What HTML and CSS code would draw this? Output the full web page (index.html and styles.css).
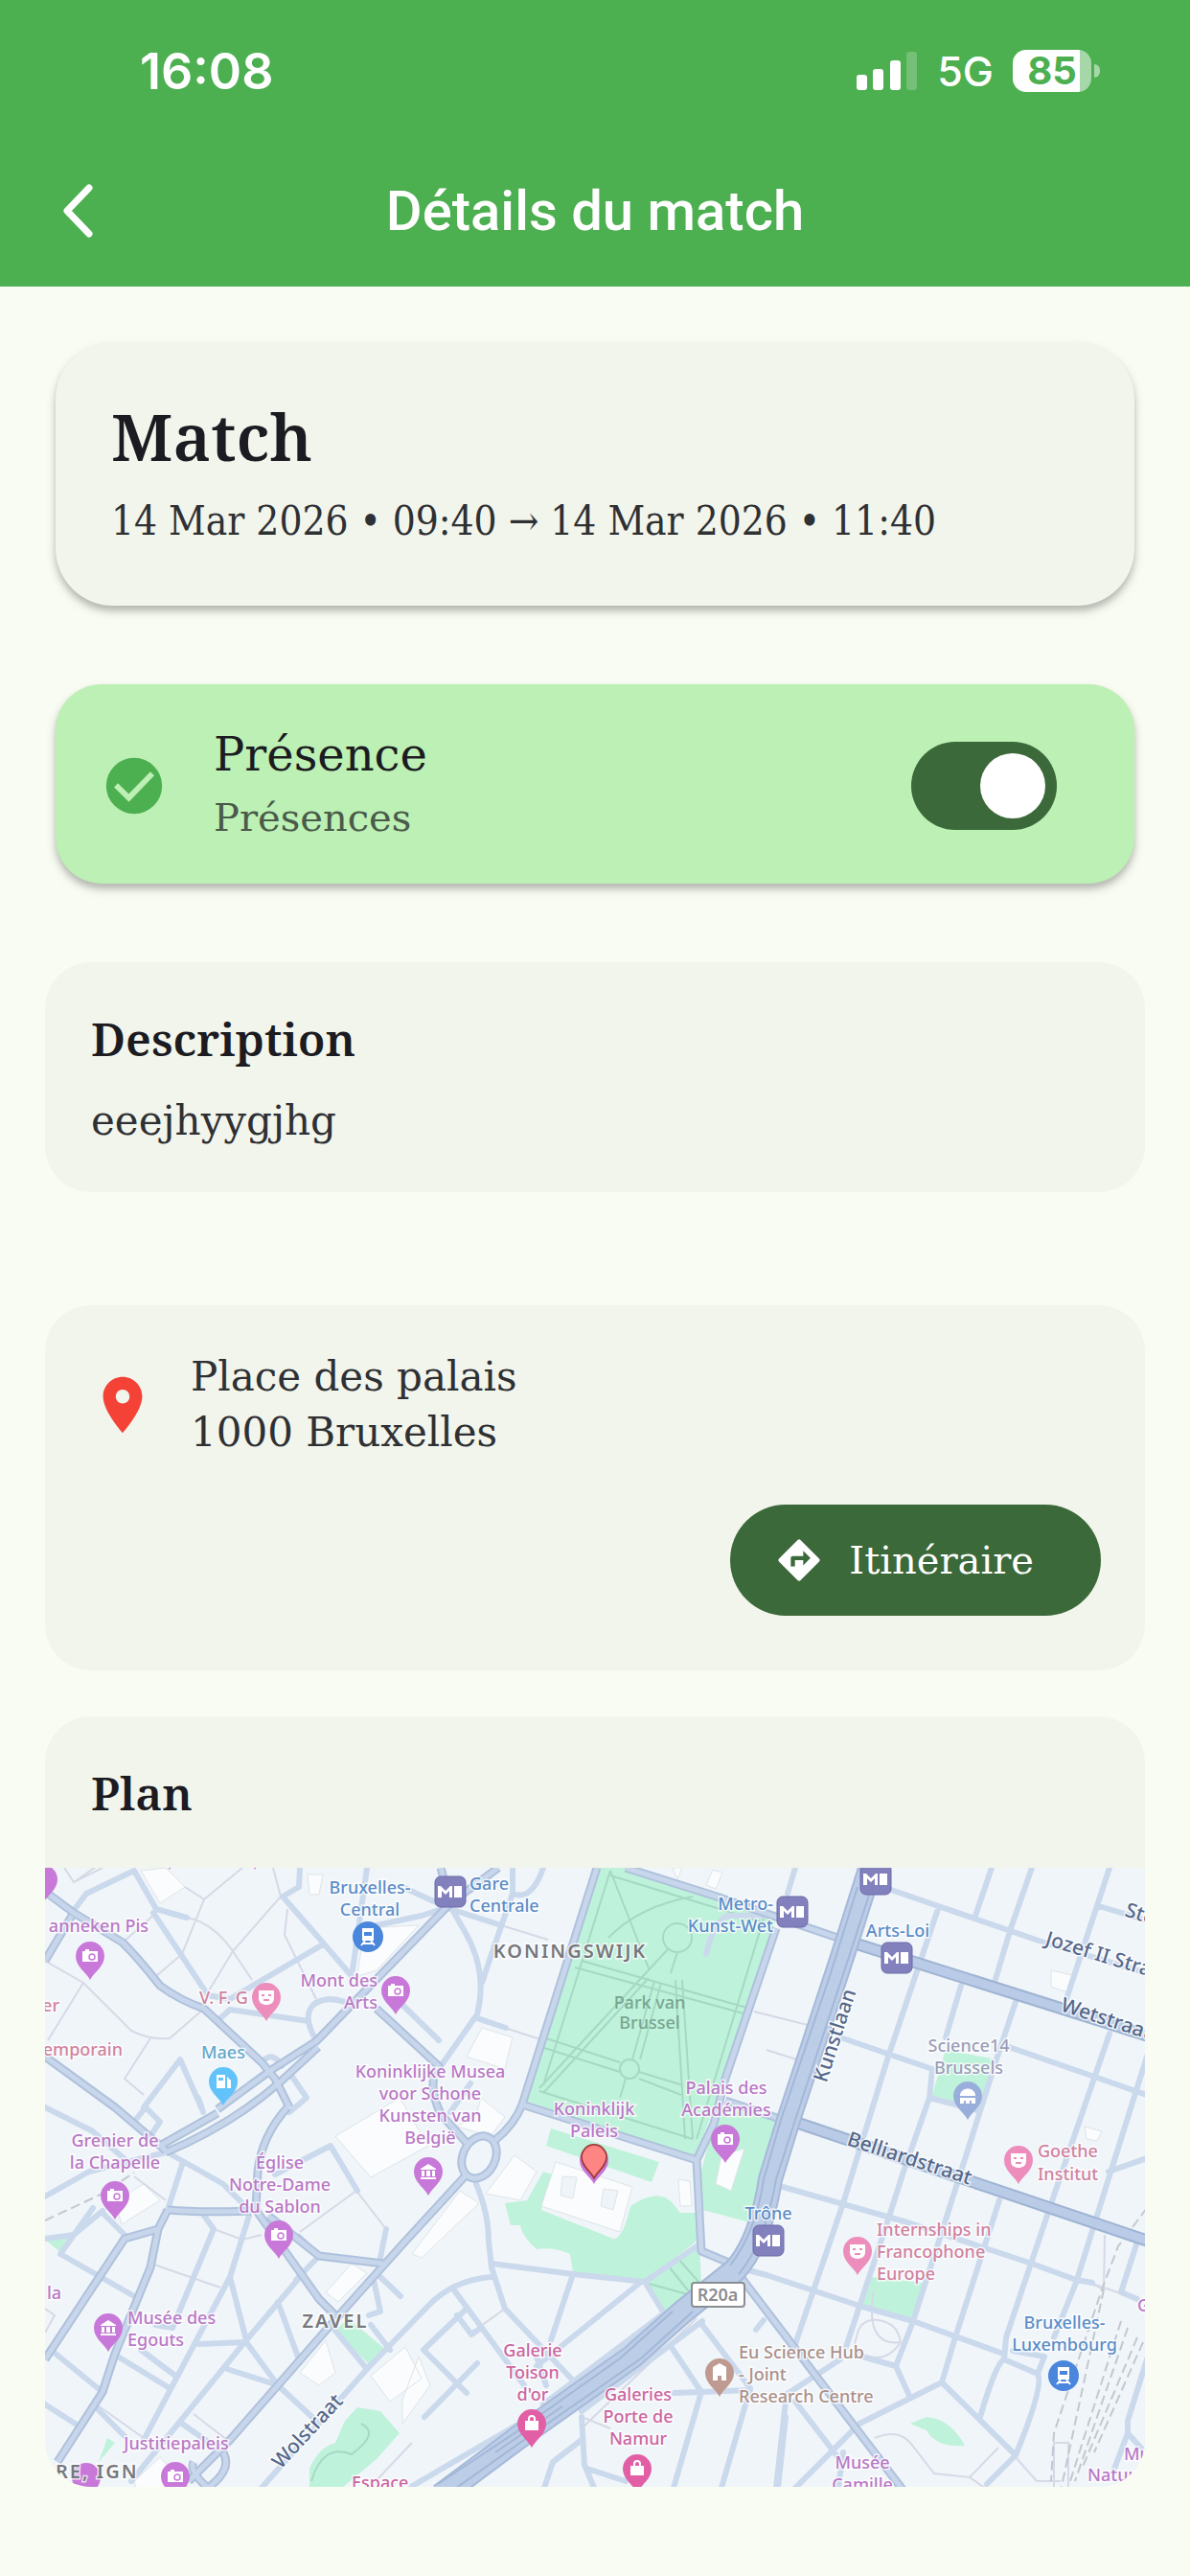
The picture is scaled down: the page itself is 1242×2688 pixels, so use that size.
FILE: index.html
```
<!DOCTYPE html>
<html lang="fr">
<head>
    <meta charset="UTF-8">
    <meta name="viewport" content="width=device-width, initial-scale=1.0">
    <title>Détails du match</title>
    <link rel="stylesheet" href="styles.css">
</head>
<body>
    <header class="header">
        <div class="status-bar">
            <span class="time">16:08</span>
            <div class="status-icons">
                <svg class="signal" viewBox="0 0 64 40" aria-hidden="true">
                    <rect x="0" y="24" width="11" height="16" rx="3"/>
                    <rect x="17" y="18" width="11" height="22" rx="3"/>
                    <rect x="35" y="9" width="11" height="31" rx="3"/>
                    <rect x="52" y="0" width="11" height="40" rx="3" opacity="0.22"/>
                </svg>
                <span class="network">5G</span>
                <div class="battery"><span class="battery-level">85</span></div>
            </div>
        </div>
        <div class="app-bar">
            <button type="button" class="btn-back" aria-label="Retour">
                <svg viewBox="0 0 32 56"><path d="M28 4L5 28l23 24"/></svg>
            </button>
            <h1>Détails du match</h1>
        </div>
    </header>

    <main class="content">
        <!-- Match -->
        <section class="card card-raised match">
            <h2>Match</h2>
            <p class="date">14 Mar 2026 • 09:40 → 14 Mar 2026 • 11:40</p>
        </section>

        <!-- Présence -->
        <section class="card card-raised presence">
            <svg class="icon" viewBox="0 0 24 24" aria-hidden="true">
                <circle cx="12" cy="12" r="10" fill="#4caf50"/>
                <path d="M5.500 11.800l4.600 4.500 8.400-8.700" fill="none" stroke="#bcf0b4" stroke-width="2"/>
            </svg>
            <label class="presence-text" for="presence">
                <span class="presence-title">Présence</span>
                <span class="presence-sub">Présences</span>
            </label>
            <input type="checkbox" role="switch" id="presence" class="switch" checked>
        </section>

        <!-- Description -->
        <section class="card description">
            <h3>Description</h3>
            <p>eeejhyygjhg</p>
        </section>

        <!-- Adresse -->
        <section class="card place">
            <div class="address">
                <svg class="icon" viewBox="0 0 24 24" aria-hidden="true">
                    <path fill="#f44336" d="M12 2C8.1 2 5 5.1 5 9c0 5.300 7 13 7 13s7-7.700 7-13c0-3.900-3.100-7-7-7zm0 9.500a2.500 2.500 0 1 1 0-5 2.500 2.500 0 0 1 0 5z"/>
                </svg>
                <p>Place des palais<br>1000 Bruxelles</p>
            </div>
            <button type="button" class="btn-route">
                <svg viewBox="0 0 24 24" aria-hidden="true">
                    <path fill="#fff" d="M21.700 11.300l-9-9a1 1 0 0 0-1.400 0l-9 9a1 1 0 0 0 0 1.400l9 9a1 1 0 0 0 1.400 0l9-9a1 1 0 0 0 0-1.400zM14 14.500V12h-4v3H8v-4c0-.6.400-1 1-1h5V7.500l3.500 3.500-3.500 3.500z"/>
                </svg>
                <span>Itinéraire</span>
            </button>
        </section>

        <!-- Plan -->
        <section class="card plan">
            <h3>Plan</h3>
            <svg class="map" viewBox="0 0 1148 646" role="img" aria-label="Plan du quartier">
                <defs>
                    <path id="pin" d="M0 25C-4 17-15 11-15 0A15 15 0 1 1 15 0C15 11 4 17 0 25z"/>
                    <g id="camera" fill="#fff">
                        <path d="M-8-5h3v-2h4v2h9V6H-8z"/>
                        <circle cx="2" cy="1" r="3" fill="none" stroke="#c878d8" stroke-width="1.500"/>
                    </g>
                    <g id="museum" fill="#fff">
                        <path d="M-8-3L0-8l8 5v1H-8zM-7-1h3v6h-3zM-2-1h4v6h-4zM4-1h3v6H4zM-8 6H8v2H-8z"/>
                    </g>
                    <g id="mask">
                        <path d="M-8-7H8V1C8 6 4 8 0 8S-8 6-8 1z" fill="#fff"/>
                        <path d="M-5-2h3M2-2h3M-3 3h6" stroke="#ec8dbc" stroke-width="2"/>
                    </g>
                    <g id="bag">
                        <path d="M-7-3H7V7H-7z" fill="#fff"/>
                        <path d="M-3-3v-2a3 3 0 0 1 6 0v2" fill="none" stroke="#fff" stroke-width="2"/>
                    </g>
                    <g id="train">
                        <circle r="16" fill="#4a86dc"/>
                        <path d="M-6-9H6V4H-6z" fill="#fff"/>
                        <path d="M-4-5H4v4H-4z" fill="#4a86dc"/>
                        <path d="M-3 4l-4 5M3 4l4 5M-5 7H5" stroke="#fff" stroke-width="2"/>
                    </g>
                    <g id="metro">
                        <rect x="-16" y="-16" width="32" height="32" rx="6" fill="#8381bd" stroke="#6a69a8"/>
                        <path d="M-13 6V-6h3l5 5 5-5h2V6h-3V-1l-4 4-4-4V6z" fill="#fff"/>
                        <path d="M4-6h8V6H4z" fill="#fff"/>
                    </g>
                    <g id="roads">
                        <path d="M3 27L30 47 81 78Q98 95 120 123 140 138 166 147L226 203 240 220 255 250"/>
                        <path d="M0 97L28 50M180 252L236 211 283 181 320 143 423 37 473 0M120 290L180 256M126 297Q195 268 246 223L285 187"/>
                        <path d="M0 197L73 250 126 295M346 147L411 207Q398 225 413 257L440 287M413 0L423 37"/>
                        <path d="M576 0L498 247Q490 268 470 284M498 247L680 305M606 0L701 30 833 75M763 63L710 220 698 267 680 305 685 400 716 413M710 243L770 263"/>
                        <ellipse cx="453" cy="302" rx="17" ry="23" transform="rotate(25 453 302)"/>
                        <path d="M440 320L373 393 313 460 243 540 193 597 150 640M253 250Q226 280 222 317L220 357 286 450 303 467"/>
                        <path d="M128 357Q160 360 215 358M233 363L286 405 353 413M128 357L118 377 83 387 0 513M118 377L110 417 73 507 60 547 13 620M186 610Q196 628 170 647 150 630 155 620"/>
                    </g>
                    <g id="avenues">
                        <path d="M833 75L1150 175M776 263L1150 389"/>
                    </g>
                    <g id="ring">
                        <path d="M863-5L833 90 776 263 757 325Q747 390 720 420L666 463 613 510 500 590 413 655"/>
                    </g>
                </defs>

                <rect width="1148" height="646" fill="#f0f5f9"/>

                <!-- parcs -->
                <g fill="#bff2da">
                    <path d="M578 0H606L701 33 763 53 710 220 678 303 501 243z"/>
                    <path d="M480 350L503 347 520 317 530 320 518 357 593 387Q603 388 611 353 640 333 655 350L663 360H680L683 387 626 432 551 422 548 403Q530 395 513 398 498 385 496 373L486 373z"/>
                    <path d="M528 272L641 307 633 328 523 290zM626 433L683 393 685 433 646 465z"/>
                    <path d="M706 250L770 263 736 370 686 357 683 323 692 290z"/>
                    <path d="M940 190L993 200 980 250 925 240zM863 427L916 433 905 472 853 457z"/>
                    <path d="M903 580L920 573Q945 575 960 603 930 605 920 587z"/>
                    <path d="M303 483L316 470 356 503 340 520zM326 563L350 567 370 590 346 617 310 647H276V627Q285 605 303 600L313 577zM0 388L26 383 15 400zM65 595L73 600 56 620z"/>
                </g>

                <!-- bâtiments -->
                <g class="building">
                    <path d="M533 307L613 333 600 380 518 353z"/>
                    <path d="M540 322L555 323 551 345 538 342zM583 335L598 337 593 357 580 353z" fill="#eef4f7"/>
                    <path d="M661 325L673 327 675 353 663 353zM706 300L730 293 716 337 700 330z"/>
                    <path d="M460 340L490 300 513 317 496 347zM383 403L433 337 453 350 393 407zM440 197L456 167 488 177 480 210z"/>
                    <path d="M430 270L450 258 455 240 480 260 465 280z"/>
                    <path d="M303 280L370 240 400 290 340 323zM293 443L320 413 336 423 306 453zM73 347L103 330 120 347 80 372z"/>
                    <path d="M100 3L126 0 146 20 120 37zM333 63L390 60 346 107 326 113zM274 7L290 7 286 28 276 28z"/>
                    <path d="M266 527L293 493 303 527 286 540zM340 530L376 500 393 533 360 557zM93 640L120 615 150 647H95zM373 555L390 510 402 540 373 580z"/>
                    <path d="M1050 107L1072 112 1067 130 1050 124zM1085 270L1103 275 1098 285 1087 283zM655 0H665L660 12zM697 2L707 5 700 22 690 18z"/>
                </g>

                <!-- sentiers -->
                <g class="path">
                    <path d="M146 20L166 33 143 90 116 113M166 33L206 0M148 52Q175 57 196 87L216 117M196 87L246 30 238 0M196 87L170 130M81 78L116 47M0 97L40 120 90 170Q110 180 130 178L166 147M40 120L3 180M110 178L83 220 103 237M253 43L250 70 283 137M20 0L30 15 60 0M30 15L66-10"/>
                    <path d="M111 413L183 438M93 322L126 347M266 380L325 337 356 377M176 377L206 388 226 383M55 561L103 595M155 570L190 597M0 460L10 467 0 485"/>
                    <path d="M590 3L520 227M590 3L630 105M588 73Q620 40 676 30M560 97L736 147M553 104L733 153M520 177L600 203M620 213L666 227M518 187L600 213M620 220L664 237M650 85L516 230M630 115L520 235M660 88L653 110M665 117L676 283M658 117L668 283M643 120L621 200M636 118L613 200M516 233L676 283M750 53L680 283M590 8L750 57M606 220L600 240" stroke="#a5d9c4"/>
                    <circle cx="660" cy="73" r="15" stroke="#a5d9c4"/>
                    <circle cx="610" cy="210" r="10" stroke="#a5d9c4"/>
                    <path d="M626 433L671 445M650 415L672 442M660 407L683 433M278 640Q290 600 320 612 350 590 330 580" stroke="#a5d9c4"/>
                    <path d="M480 167L520 180M476 60L525 75M480 460L455 478M560 573L590 585M680 470L560 585M383 600L345 640M866 595Q890 585 903 600L928 632 965 636 995 605M965 636L985 650M865 440Q855 500 893 495M847 490Q850 470 870 472 890 475 893 495 880 515 860 510 840 505 847 490M740 150L800 165M753 190L800 205M1106 383L1105 440 1090 433 1140 450M1053 650V600H1068V650M1013 615L1035 640H1060"/>
                    <path class="rail" d="M1150 355L1120 395 1103 440 1053 590 1050 640M1123 473L1070 640M1130 480L1075 640M1146 495L1095 610M1105 440L1060 650M1140 490L1083 625M0 368L60 340 93 318"/>
                </g>

                <!-- rues -->
                <g class="street">
                    <path d="M31 43L43 27 93 3 116 43 148 52M113 47L170 133 193 137 290 80M266 0L265 20 248 30 290 78 320 113M183 157L193 148 275 160M283 180Q268 155 280 143 293 133 313 140M226 203Q238 190 247 207M103 250L141 200 163 250M373 143L411 180M346 60L393 50 423 40M336 0L321 107M373 20L423 43 476 60M258 218L273 240 255 255M0 250L50 275 90 310"/>
                    <path d="M413 207L451 153Q462 110 440 70L423 40M488 0V27L466 90 456 120M520 0Q508 35 488 27M451 157L481 167M444 225L423 255M690 90Q700 50 715 50H760"/>
                    <path d="M450 330Q463 360 463 390L466 417 480 460 553 537M466 413L551 424 626 432 683 393M550 427L528 493M621 433L513 520M626 432L646 465M466 427Q426 430 400 457L336 523 226 647M425 438L500 540M440 460L395 503 440 548M451 517L396 573M430 467L445 487 455 480M686 473L560 567M646 465L520 560M655 502L685 547 656 647M656 548L736 545M686 477L736 543 706 647M560 573L563 623 573 647M560 597L530 620 521 647M566 627L606 640M773 573L765 647M723 417L753 425M380 647L500 577M513 510L523 540M742 482L750 472"/>
                    <path d="M783 0L775 27M883 23L1040 77 1150 110M933 40L880 197 833 350 783 497M988 0L971 50M1030 0L1008 63 990 123M1111 0L1066 137M1100 40L1150 55M956 123L940 177M1013 140L993 200 936 380 906 473 888 520 903 553M830 177L926 210 923 240 973 253M923 240L896 317 880 367 836 500M1006 187L1150 237M1111 173L1056 333 1003 490 1001 513 1036 528 1043 510 1010 504M1150 197L1076 433 1053 490M1110 317L1150 303"/>
                    <path d="M770 333L900 370 1030 413 1076 430 1093 433M753 425L850 457 906 473 1000 507M996 347L950 490 936 537 1013 613 983 643M853 510L888 520M936 537L850 580 783 647M830 513L773 550M773 557L763 647M783 557L826 613M833 610L828 647M1001 513Q993 515 976 573M1036 528Q1043 540 1013 613M1140 390L1123 443 1140 450M1150 513L1130 577V590L1116 627M1130 590L1148 610"/>
                    <path d="M143 310L128 357M133 300L186 330 206 350M0 343L46 317 126 297M60 360L83 383M0 387L30 383 60 358M16 403L93 447M166 363L176 377 133 480 115 477M213 363L193 427 103 597M193 427L210 493M160 497L210 495 243 540M16 403L50 355M266 427L210 493 90 640M243 453L265 513M190 523L243 540 283 577M6 503L60 547M76 510L130 543M100 503L136 530M0 560L36 583M53 563L83 593M240 320L298 290 326 337M356 377L350 407M343 430L350 463 338 467M350 427L371 447M303 483L336 523M340 477L360 503M143 580L186 610M265 385L286 405 262 430M93 265L105 250 120 265 110 280M165 255L160 240"/>
                </g>

                <!-- axes principaux -->
                <use href="#roads" class="road-edge"/>
                <use href="#roads" class="road"/>
                <path class="road-edge" d="M723 423L896 650"/>
                <path class="road" d="M723 423L896 650"/>
                <use href="#avenues" class="avenue-edge"/>
                <use href="#avenues" class="avenue"/>
                <use href="#ring" class="ring-edge"/>
                <use href="#ring" class="ring"/>
                <path class="ring-lane" d="M866 10L840 90 783 263 763 325Q752 390 724 424M848 20L820 110 768 263 750 325Q742 380 715 415M655 463L600 512 490 590 410 643M676 463L622 512 510 590 425 650M540 562L470 610"/>

                <!-- repères -->
                <g fill="#c878d8" class="pins">
                    <use href="#pin" x="-2" y="12"/>
                    <use href="#pin" x="130" y="-23"/>
                    <use href="#pin" x="219" y="-23"/>
                    <use href="#pin" x="47" y="92"/><use href="#camera" x="47" y="92"/>
                    <use href="#pin" x="366" y="128"/><use href="#camera" x="366" y="128"/>
                    <use href="#pin" x="73" y="342"/><use href="#camera" x="73" y="342"/>
                    <use href="#pin" x="244" y="383"/><use href="#camera" x="244" y="383"/>
                    <use href="#pin" x="710" y="283"/><use href="#camera" x="710" y="283"/>
                    <use href="#pin" x="136" y="635"/><use href="#camera" x="136" y="635"/>
                    <use href="#pin" x="43" y="636"/>
                    <use href="#pin" x="66" y="480"/><use href="#museum" x="66" y="480"/>
                    <use href="#pin" x="400" y="317"/><use href="#museum" x="400" y="317"/>
                    <use href="#pin" x="573" y="305"/>
                </g>
                <g fill="#ec8dbc" class="pins">
                    <use href="#pin" x="231" y="135"/><use href="#mask" x="231" y="135"/>
                    <use href="#pin" x="1016" y="305"/><use href="#mask" x="1016" y="305"/>
                    <use href="#pin" x="848" y="400"/><use href="#mask" x="848" y="400"/>
                </g>
                <g fill="#e25fa6" class="pins">
                    <use href="#pin" x="508" y="580"/><use href="#bag" x="508" y="580"/>
                    <use href="#pin" x="618" y="627"/><use href="#bag" x="618" y="627"/>
                </g>
                <use href="#pin" x="186" y="223" fill="#62c3fb"/>
                <path d="M179 216h9v14h-9zM190 218l4 4v8h-4" fill="#fff"/>
                <path d="M181 219h5v3h-5z" fill="#62c3fb"/>
                <use href="#pin" x="704" y="527" fill="#bf9a90"/>
                <path d="M697 535V521l7-4 7 4v14h-5v-5h-4v5z" fill="#fff"/>
                <use href="#pin" x="963" y="238" fill="#9aaedb"/>
                <path d="M955 238c0-10 16-10 16 0zM955 240h16v6h-4v-3h-2v3h-4v-3h-2v3h-4z" fill="#fff"/>
                <use href="#train" x="337" y="72"/>
                <use href="#train" x="1063" y="530"/>
                <use href="#metro" x="423" y="25"/>
                <use href="#metro" x="780" y="46"/>
                <use href="#metro" x="867" y="12"/>
                <use href="#metro" x="889" y="94"/>
                <use href="#metro" x="755" y="389"/>
                <rect x="675" y="433" width="55" height="25" rx="3" fill="#fff" stroke="#8b8d91" stroke-width="2"/>

                <!-- noms -->
                <g class="label transit">
                    <text x="339" y="27" class="mid">Bruxelles-</text>
                    <text x="339" y="50" class="mid">Central</text>
                    <text x="443" y="23">Gare</text>
                    <text x="443" y="46">Centrale</text>
                    <text x="760" y="44" class="end">Metro-</text>
                    <text x="760" y="67" class="end">Kunst-Wet</text>
                    <text x="890" y="72" class="mid">Arts-Loi</text>
                    <text x="755" y="367" class="mid">Trône</text>
                    <text x="1064" y="481" class="mid">Bruxelles-</text>
                    <text x="1064" y="504" class="mid">Luxembourg</text>
                </g>
                <g class="label sight">
                    <text x="108" y="67" class="end">anneken Pis</text>
                    <text x="347" y="124" class="end">Mont des</text>
                    <text x="347" y="147" class="end">Arts</text>
                    <text x="402" y="219" class="mid">Koninklijke Musea</text>
                    <text x="402" y="242" class="mid">voor Schone</text>
                    <text x="402" y="265" class="mid">Kunsten van</text>
                    <text x="402" y="288" class="mid">België</text>
                    <text x="573" y="258" class="mid">Koninklijk</text>
                    <text x="573" y="281" class="mid">Paleis</text>
                    <text x="711" y="236" class="mid">Palais des</text>
                    <text x="711" y="259" class="mid">Académies</text>
                    <text x="73" y="291" class="mid">Grenier de</text>
                    <text x="73" y="314" class="mid">la Chapelle</text>
                    <text x="245" y="314" class="mid">Église</text>
                    <text x="245" y="337" class="mid">Notre-Dame</text>
                    <text x="245" y="360" class="mid">du Sablon</text>
                    <text x="2" y="450">la</text>
                    <text x="86" y="476">Musée des</text>
                    <text x="86" y="499">Egouts</text>
                    <text x="137" y="607" class="mid">Justitiepaleis</text>
                    <text x="853" y="627" class="mid">Musée</text>
                    <text x="853" y="650" class="mid">Camille</text>
                    <text x="1126" y="618">Mu</text>
                    <text x="1088" y="640">Natuur</text>
                    <text x="1140" y="463">G</text>
                </g>
                <g class="label culture">
                    <text x="15" y="150" class="end">er</text>
                    <text x="81" y="196" class="end">emporain</text>
                    <text x="161" y="142">V. F. G</text>
                    <text x="1036" y="302">Goethe</text>
                    <text x="1036" y="326">Institut</text>
                    <text x="868" y="384">Internships in</text>
                    <text x="868" y="407">Francophone</text>
                    <text x="868" y="430">Europe</text>
                </g>
                <g class="label shop">
                    <text x="509" y="510" class="mid">Galerie</text>
                    <text x="509" y="533" class="mid">Toison</text>
                    <text x="509" y="556" class="mid">d'or</text>
                    <text x="619" y="556" class="mid">Galeries</text>
                    <text x="619" y="579" class="mid">Porte de</text>
                    <text x="619" y="602" class="mid">Namur</text>
                    <text x="320" y="648">Espace</text>
                </g>
                <g class="label office">
                    <text x="724" y="512">Eu Science Hub</text>
                    <text x="724" y="535">- Joint</text>
                    <text x="724" y="558">Research Centre</text>
                </g>
                <text x="186" y="199" class="label fuel mid">Maes</text>
                <text x="964" y="192" class="label science mid">Science14</text>
                <text x="964" y="215" class="label science mid">Brussels</text>
                <text x="631" y="147" class="label green mid">Park van</text>
                <text x="631" y="168" class="label green mid">Brussel</text>
                <text x="702" y="452" class="shield mid">R20a</text>
                <g class="label district">
                    <text x="548" y="94" class="mid">KONINGSWIJK</text>
                    <text x="303" y="480" class="mid">ZAVEL</text>
                    <text x="11" y="637">RE, IGN</text>
                </g>
                <g class="label road-name">
                    <text class="mid" transform="translate(831 177) rotate(-72)">Kunstlaan</text>
                    <text transform="translate(836 289) rotate(18)">Belliardstraat</text>
                    <text transform="translate(1059 149) rotate(18)">Wetstraat</text>
                    <text transform="translate(1043 80) rotate(17)">Jozef II Straat</text>
                    <text transform="translate(1126 50) rotate(18)">Steenweg</text>
                    <text transform="translate(246 628) rotate(-47)">Wolstraat</text>
                </g>

                <!-- lieu du match -->
                <use href="#pin" x="0" y="0" transform="translate(573 302) scale(0.87)" fill="#ff8585" stroke="#a03a3a" stroke-width="2"/>
            </svg>
        </section>
    </main>
</body>
</html>
```

FILE: styles.css
```
* {
    margin: 0;
    padding: 0;
    box-sizing: border-box;
}

body {
    font-family: "DejaVu Serif", serif;
    background: #f8fcf2;
    color: #1b1b21;
    min-height: 100vh;
}

button {
    border: none;
    background: none;
    font: inherit;
    cursor: pointer;
}

.header {
    background: #4caf50;
    color: white;
}

.status-bar {
    display: flex;
    justify-content: space-between;
    align-items: center;
    height: 148px;
    padding: 0 94px 0 146px;
    font-family: Inter, sans-serif;
}

.time {
    font-size: 52px;
    font-weight: 600;
}

.status-icons {
    display: flex;
    align-items: center;
    gap: 20px;
}

.signal {
    width: 64px;
    height: 40px;
    fill: white;
}

.network {
    font-size: 43px;
    font-weight: 500;
}

.battery {
    position: relative;
    width: 82px;
    height: 44px;
    margin-right: 9px;
    border-radius: 14px;
    background: linear-gradient(to right, white 85%, rgba(255, 255, 255, 0.5) 85%);
    text-align: center;
}

.battery::after {
    content: "";
    position: absolute;
    right: -9px;
    top: 15px;
    width: 6px;
    height: 14px;
    border-radius: 0 6px 6px 0;
    background: rgba(255, 255, 255, 0.5);
}

.battery-level {
    display: block;
    font-size: 40px;
    line-height: 44px;
    font-weight: 700;
    color: #4caf50;
}

.app-bar {
    display: grid;
    grid-template-columns: 97px 1fr 97px;
    align-items: center;
    height: 151px;
    padding-bottom: 8px;
}

.btn-back {
    justify-self: end;
    height: 56px;
}

.btn-back svg {
    display: block;
    width: 32px;
    height: 56px;
    fill: none;
    stroke: white;
    stroke-width: 7;
    stroke-linecap: round;
    stroke-linejoin: round;
}

.app-bar h1 {
    font-family: Roboto, sans-serif;
    font-size: 58px;
    font-weight: 500;
    text-align: center;
}

.content {
    padding: 58px 47px 93px;
}

.card {
    background: #f2f5ec;
    border-radius: 48px;
}

.card-raised {
    margin: 0 11px 82px;
    box-shadow: 0 5px 6px rgba(0, 0, 0, 0.16), 0 6px 12px rgba(0, 0, 0, 0.14);
}

.card h2,
.card h3 {
    font-family: "Noto Serif", "DejaVu Serif", serif;
    font-weight: 600;
}

.card h2 {
    font-size: 68px;
    line-height: 80px;
}

.card h3 {
    font-size: 48px;
    line-height: 64px;
}

.card p {
    font-size: 42px;
    line-height: 60px;
    color: #2f3033;
}

.icon {
    flex: none;
    width: 70px;
    height: 70px;
}

.match {
    padding: 58px;
    border-radius: 60px;
}

.match .date {
    margin-top: 19px;
    font-family: "DejaVu Serif Condensed", "DejaVu Serif", serif;
}

.presence {
    display: flex;
    align-items: center;
    gap: 48px;
    padding: 40px 81px 36px 47px;
    background: #bcf0b4;
}

.presence-text {
    flex: 1;
    line-height: 66px;
}

.presence-title,
.presence-sub {
    display: block;
}

.presence-title {
    font-size: 48px;
}

.presence-sub {
    font-size: 40px;
    color: #4a5a4a;
}

.switch {
    appearance: none;
    flex: none;
    width: 152px;
    height: 92px;
    padding: 12px;
    border-radius: 46px;
    background: #9aa39a;
    cursor: pointer;
}

.switch::before {
    content: "";
    display: block;
    width: 68px;
    height: 68px;
    border-radius: 50%;
    background: white;
}

.switch:checked {
    background: #3b6939;
}

.switch:checked::before {
    margin-left: auto;
}

.description {
    padding: 48px 48px 44px;
    margin-bottom: 118px;
}

.description p {
    margin-top: 24px;
}

.place {
    padding: 46px 46px 57px;
    margin-bottom: 48px;
}

.address {
    display: flex;
    align-items: center;
    gap: 36px;
    margin-bottom: 46px;
}

.address p {
    line-height: 58px;
}

.btn-route {
    display: flex;
    align-items: center;
    gap: 26px;
    height: 116px;
    margin-left: auto;
    padding: 0 70px 0 46px;
    border-radius: 58px;
    background: #3b6939;
    color: white;
    font-size: 40px;
}

.btn-route svg {
    width: 52px;
    height: 52px;
}

.plan {
    overflow: hidden;
}

.plan h3 {
    padding: 48px 48px 46px;
}

/* Carte */
.map {
    display: block;
    width: 100%;
    height: auto;
    font-family: "Noto Sans", sans-serif;
}

.building {
    fill: #fbfcfd;
    stroke: #dde4e7;
    stroke-width: 1;
}

.path {
    fill: none;
    stroke: #d6d9e6;
    stroke-width: 2;
}

.rail {
    stroke: #c3c7cf;
    stroke-dasharray: 10 5;
}

.street {
    fill: none;
    stroke: #cbd9ed;
    stroke-width: 6;
    stroke-linecap: round;
    stroke-linejoin: round;
}

.road-edge,
.road,
.avenue-edge,
.avenue,
.ring-edge,
.ring,
.ring-lane {
    fill: none;
    stroke-linejoin: round;
}

.road-edge {
    stroke: #afc1dc;
    stroke-width: 9;
}

.road {
    stroke: #c7d6eb;
    stroke-width: 5;
}

.avenue-edge {
    stroke: #9fb4d3;
    stroke-width: 13;
}

.avenue {
    stroke: #b9cbe6;
    stroke-width: 9;
}

.ring-edge {
    stroke: #a6b9d8;
    stroke-width: 26;
}

.ring {
    stroke: #bccde8;
    stroke-width: 22;
}

.ring-lane {
    stroke: #a3b7d6;
    stroke-width: 2;
}

.pins {
    stroke: none;
}

.label {
    font-size: 18px;
    font-weight: 500;
    paint-order: stroke;
    stroke: rgba(255, 255, 255, 0.75);
    stroke-width: 3px;
}

.mid {
    text-anchor: middle;
}

.end {
    text-anchor: end;
}

.transit {
    fill: #5b8dc8;
}

.sight {
    fill: #b978c6;
}

.culture {
    fill: #d0829f;
}

.shop {
    fill: #cc65a0;
}

.office {
    fill: #ab9089;
}

.fuel {
    fill: #62a9ca;
}

.science {
    fill: #9c9db9;
}

.green {
    fill: #78a592;
    stroke: none;
}

.district {
    font-size: 20px;
    font-weight: 600;
    letter-spacing: 2px;
    fill: #77787c;
}

.road-name {
    font-size: 21px;
    fill: #55688a;
}

.shield {
    font-size: 18px;
    font-weight: 600;
    fill: #8b8d91;
}
```
